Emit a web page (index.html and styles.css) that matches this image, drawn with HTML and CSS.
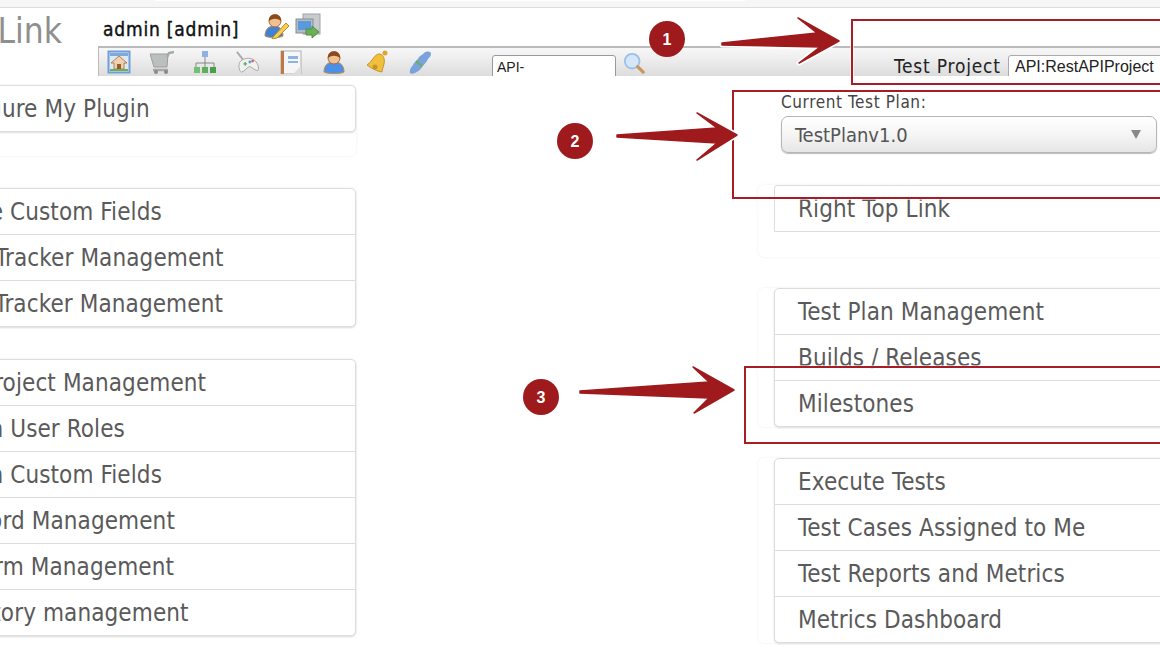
FILE: index.html
```html
<!DOCTYPE html>
<html lang="en">
<head>
<meta charset="utf-8">
<title>TestLink</title>
<link rel="stylesheet" href="styles.css">
</head>
<body>
<div class="page">
  <div class="topstrip"><div class="toptab"></div></div>
  <header class="header">
    <div class="logo"><span>TestLink</span></div>
    <div class="headmain">
      <div class="userrow">
        <span class="username">admin [admin]</span>
        <svg class="uicon" viewBox="0 0 26 26"><path d="M1 23c0-7 4-10 9-10s9 3 9 10c-3 2-15 2-18 0z" fill="#3f83d8" stroke="#c08a4a"/><circle cx="11" cy="8" r="6" fill="#f0c090" stroke="#a8683a"/><path d="M5 8c-1-9 13-9 12 0-4-3-8-3-12 0z" fill="#8a4a1e"/><path d="M9 24l13-14 3 3-12 12-5 1z" fill="#f3cf58" stroke="#c08a20"/></svg>
        <svg class="uicon" viewBox="0 0 26 26"><rect x="8" y="1" width="17" height="20" fill="#c8cbce" stroke="#a0a4a8"/><rect x="1" y="6" width="17" height="14" fill="#aebccb" stroke="#8a8e93"/><rect x="3" y="8" width="13" height="9" fill="#5a9adb"/><path d="M11 16h6v-3l7 6-7 6v-3h-6z" fill="#6cb055" stroke="#4f8f42"/></svg>
      </div>
      <div class="toolbar">
        <nav class="tools">
          <svg class="ico" viewBox="0 0 24 24"><rect x="1.500" y="1.500" width="21" height="21" fill="#dfe9f5" stroke="#6f9fd8" stroke-width="2"/><rect x="3" y="3" width="18" height="3" fill="#7fa9dc"/><path d="M4 13l8-7 8 7h-3v6H7v-6z" fill="#ecd2ae" stroke="#a8683a" stroke-width=".8"/><rect x="10" y="14" width="4" height="5" fill="#9a5a2a"/><rect x="3" y="19" width="18" height="2" fill="#6cb055"/></svg>
          <svg class="ico" viewBox="0 0 24 24"><path d="M0 4h18l-1 13H4z" fill="#bcbfbf" stroke="#9a9d9d"/><path d="M17 7l2-4 5-1" fill="none" stroke="#a5a8a8" stroke-width="2.500"/><path d="M3 20h15" stroke="#a5a8a8" stroke-width="2.500"/><circle cx="6" cy="22" r="2" fill="#888"/><circle cx="16" cy="22" r="2" fill="#888"/></svg>
          <svg class="ico" viewBox="0 0 24 24"><rect x="9" y="1" width="6" height="6" fill="#8fb2e4"/><path d="M12 7v5M3 17v-4h18v4M12 12v5" fill="none" stroke="#888"/><rect x="1" y="17" width="6" height="6" fill="#72c072"/><rect x="9" y="17" width="6" height="6" fill="#5cb05c"/><rect x="17" y="17" width="6" height="6" fill="#4aa04a"/></svg>
          <svg class="ico" viewBox="0 0 26 26"><path d="M1 2l7 9" stroke="#aaa" stroke-width="2"/><path d="M5 12c5-4 12-4 16 0 3 3 4 7 3 10-3 1-6-3-9-4-3 0-5 5-9 6-3-1-4-9-1-12z" fill="#f1f1f1" stroke="#a5a5a5"/><path d="M8 15h4M10 13v4" stroke="#5cb05c" stroke-width="1.500"/><circle cx="15" cy="13" r="1.500" fill="#5a9adb"/><circle cx="18" cy="12" r="1.500" fill="#e06060"/></svg>
          <svg class="ico" viewBox="0 0 24 24"><rect x="2" y="1" width="20" height="23" fill="#f6f6f6" stroke="#b0b0b0"/><rect x="2" y="1" width="3" height="23" fill="#c07840"/><rect x="9" y="6" width="10" height="3" fill="#8fb2e4"/><rect x="9" y="11" width="10" height="2" fill="#8fb2e4"/><path d="M14 24l8-8v8z" fill="#ddd"/></svg>
          <svg class="ico" viewBox="0 0 24 24"><path d="M2 22c0-7 4-10 10-10s10 3 10 10c-3 2-17 2-20 0z" fill="#4a90e8" stroke="#c08a4a"/><circle cx="12" cy="8" r="6" fill="#f0c090" stroke="#a8683a"/><path d="M6 8c-1-9 13-9 12 0-4-3-8-3-12 0z" fill="#8a4a1e"/></svg>
          <svg class="ico" viewBox="0 0 24 24"><path d="M15 4c-4 0-5 2-8 6-2 3-4 4-5 5 4 3 9 6 15 7 0-2 1-4 2-8 1-4 0-9-4-10z" fill="#f0bf3c" stroke="#c8922a"/><circle cx="20" cy="3" r="2.500" fill="#e0a530"/><circle cx="10" cy="17" r="2.500" fill="#c8922a"/></svg>
          <svg class="ico" viewBox="0 0 24 24"><path d="M2 23c-1-5 3-7 4-10 3-2 4-5 6-7 2-1 3-2 4-3 3-2 7-2 7 1 0 3-3 4-4 7-1 2-3 3-4 5-2 3-4 5-8 7-2 1-4 1-5 0z" fill="#7ba2da"/><path d="M8 11l6 5" stroke="#6cb055" stroke-width="2"/></svg>
        </nav>
        <div class="search">
          <span class="textbox">API-</span>
          <svg class="ico mag" viewBox="0 0 24 24"><circle cx="10" cy="10" r="8" fill="#d6e6f9" stroke="#9cc0e8" stroke-width="2"/><path d="M16 16l6 6" stroke="#c99660" stroke-width="3.500" stroke-linecap="round"/></svg>
        </div>
        <div class="project">
          <span class="projlabel">Test Project</span>
          <span class="projselect">API:RestAPIProject</span>
        </div>
      </div>
    </div>
  </header>
  <main class="content">
    <section class="col left">
      <div class="wrap footed"><ul class="panel"><li>Configure My Plugin</li></ul></div>
      <div class="wrap"><ul class="panel">
        <li>Define Custom Fields</li>
        <li>Issue Tracker Management</li>
        <li>Code Tracker Management</li>
      </ul></div>
      <div class="wrap"><ul class="panel">
        <li>Test Project Management</li>
        <li>Assign User Roles</li>
        <li>Assign Custom Fields</li>
        <li>Keyword Management</li>
        <li>Platform Management</li>
        <li>Inventory management</li>
      </ul></div>
    </section>
    <section class="col right">
      <div class="planbox">
        <div class="planlabel">Current Test Plan:</div>
        <div class="planselect"><span>TestPlanv1.0</span><i class="caret"></i></div>
      </div>
      <div class="wrap inset footed"><ul class="panel square"><li>Right Top Link</li></ul></div>
      <div class="wrap inset"><ul class="panel">
        <li>Test Plan Management</li>
        <li>Builds / Releases</li>
        <li>Milestones</li>
      </ul></div>
      <div class="wrap inset"><ul class="panel">
        <li>Execute Tests</li>
        <li>Test Cases Assigned to Me</li>
        <li>Test Reports and Metrics</li>
        <li>Metrics Dashboard</li>
      </ul></div>
    </section>
  </main>
  <svg class="notes" viewBox="0 0 1160 665">
    <g class="boxhalo">
      <rect x="852" y="20" width="320" height="64"/>
      <rect x="733" y="91" width="440" height="107"/>
      <rect x="745" y="367" width="430" height="76"/>
    </g>
    <g class="box">
      <rect x="852" y="20" width="320" height="64"/>
      <rect x="733" y="91" width="440" height="107"/>
      <rect x="745" y="367" width="430" height="76"/>
    </g>
    <g class="arrowhalo">
      <path d="M722 43L817 33L798 18L839 41L799 63L820 47L722 45z"/>
      <path d="M617 135L717 128L697 113L737 135L697 160L717 143L617 137z"/>
      <path d="M580 391L709 382L693 367L734 390L694 413L709 398L580 393z"/>
    </g>
    <g class="arrow">
      <path d="M722 43L817 33L798 18L839 41L799 63L820 47L722 45z"/>
      <path d="M617 135L717 128L697 113L737 135L697 160L717 143L617 137z"/>
      <path d="M580 391L709 382L693 367L734 390L694 413L709 398L580 393z"/>
    </g>
    <g class="dot">
      <circle cx="667" cy="39" r="18"/>
      <circle cx="575" cy="141" r="18"/>
      <circle cx="541" cy="397" r="18"/>
    </g>
    <g class="num">
      <text x="667" y="45">1</text>
      <text x="575" y="147">2</text>
      <text x="541" y="403">3</text>
    </g>
  </svg>
</div>
</body>
</html>
```

FILE: styles.css
```css
* { box-sizing: border-box; }
html, body { margin: 0; padding: 0; background: #fff; }
.page {
  position: relative;
  width: 1160px;
  height: 665px;
  overflow: hidden;
  font-family: "DejaVu Sans", sans-serif;
  font-stretch: condensed;
  color: #555;
}
.topstrip {
  height: 8px;
  background: #f6f6f6;
  border-bottom: 1px solid #ddd;
  padding-left: 155px;
}
.toptab {
  width: 590px;
  height: 1px;
  background: #fff;
}
.header { display: flex; height: 68px; }
.logo {
  width: 98px;
  flex: none;
  display: flex;
  justify-content: flex-end;
  padding-right: 36px;
  font-size: 35px;
  line-height: 46px;
  color: #8f8f8f;
  white-space: nowrap;
}
.headmain { flex: 1; min-width: 0; display: flex; flex-direction: column; }
.userrow {
  height: 38px;
  display: flex;
  align-items: center;
  padding-left: 5px;
}
.username {
  font-size: 19px;
  letter-spacing: 0.8px;
  color: #111;
  width: 161px;
  padding-top: 4px;
  white-space: nowrap;
  -webkit-text-stroke: 0.4px #111;
}
.uicon { width: 26px; height: 26px; margin-right: 5px; margin-top: -2px; }
.toolbar {
  height: 30px;
  display: flex;
  border-top: 2px solid #bbb;
  border-left: 1px solid #bbb;
  background: linear-gradient(#f7f7f7, #efefef 35%, #dcdcdc);
  overflow: hidden;
}
.tools { display: flex; gap: 19px; padding: 2px 0 0 8px; width: 393px; flex: none; }
.ico { width: 24px; height: 24px; flex: none; }
.search { display: flex; width: 402px; flex: none; }
.textbox {
  width: 124px;
  height: 30px;
  margin-top: 7px;
  padding: 3px 4px;
  background: #fff;
  border: 1px solid #999;
  border-radius: 3px;
  font: 14px "Liberation Sans", sans-serif;
  color: #222;
}
.mag { margin: 4px 0 0 7px; width: 22px; height: 22px; }
.project { display: flex; align-items: flex-start; white-space: nowrap; padding-top: 7px; }
.projlabel { font-size: 19px; letter-spacing: 0.8px; color: #222; width: 114px; line-height: 22px; }
.projselect {
  width: 170px;
  height: 30px;
  padding: 2px 6px;
  background: #fff;
  border: 1px solid #aaa;
  border-radius: 3px;
  font: 16px "Liberation Sans", sans-serif;
  color: #222;
}
.content { display: flex; align-items: flex-start; padding-top: 9px; }
.col { display: flex; flex-direction: column; flex: none; }
.left { width: 448px; margin-left: -92px; margin-right: 402px; gap: 32px; }
.right { width: 500px; }
.wrap { background: #fff; border-radius: 6px; box-shadow: 0 0 3px #eee; }
.footed { padding-bottom: 24px; }
.inset { padding-left: 16px; margin-bottom: 31px; }
.inset.footed { padding-bottom: 25px; }
.panel {
  list-style: none;
  margin: 0;
  padding: 0;
  background: #fff;
  border: 1px solid #ddd;
  border-radius: 5px;
  box-shadow: 0 1px 2px #ddd;
}
.panel.square { border-radius: 3px 0 0 0; box-shadow: none; }
.panel li {
  height: 46px;
  padding-left: 23px;
  border-top: 1px solid #ddd;
  font-size: 24px;
  letter-spacing: 0.1px;
  line-height: 46px;
  color: #5a5a5a;
  white-space: nowrap;
}
.panel li:first-child { height: 45px; border-top: 0; }
.planbox { padding: 8px 0 0 23px; height: 100px; }
.planlabel { font-size: 17px; letter-spacing: 0.6px; line-height: 19px; color: #444; white-space: nowrap; }
.planselect {
  width: 376px;
  height: 37px;
  margin-top: 4px;
  padding: 0 13px;
  display: flex;
  align-items: center;
  justify-content: space-between;
  border: 1px solid #b5b5b5;
  border-radius: 7px;
  background: linear-gradient(#fff, #f5f5f5 50%, #e6e6e6);
  box-shadow: 0 1px 1px #bbb;
  font-size: 20px;
  color: #555;
}
.caret {
  width: 0;
  height: 0;
  margin-right: 2px;
  border-left: 5px solid transparent;
  border-right: 5px solid transparent;
  border-top: 9px solid #888;
}
.notes { position: absolute; left: 0; top: 0; width: 1160px; height: 665px; }
.boxhalo rect { fill: none; stroke: #fff; stroke-width: 4; opacity: .6; }
.box rect { fill: none; stroke: #a61e25; stroke-width: 2; }
.arrowhalo path { fill: #fff; stroke: #fff; stroke-width: 5; stroke-linejoin: round; }
.arrow path { fill: #9f1a1c; stroke: #9f1a1c; stroke-width: 1.5; stroke-linejoin: round; }
.dot circle { fill: #9f1a1c; }
.num text { fill: #fff; font: bold 16px "Liberation Sans", sans-serif; text-anchor: middle; }
```
